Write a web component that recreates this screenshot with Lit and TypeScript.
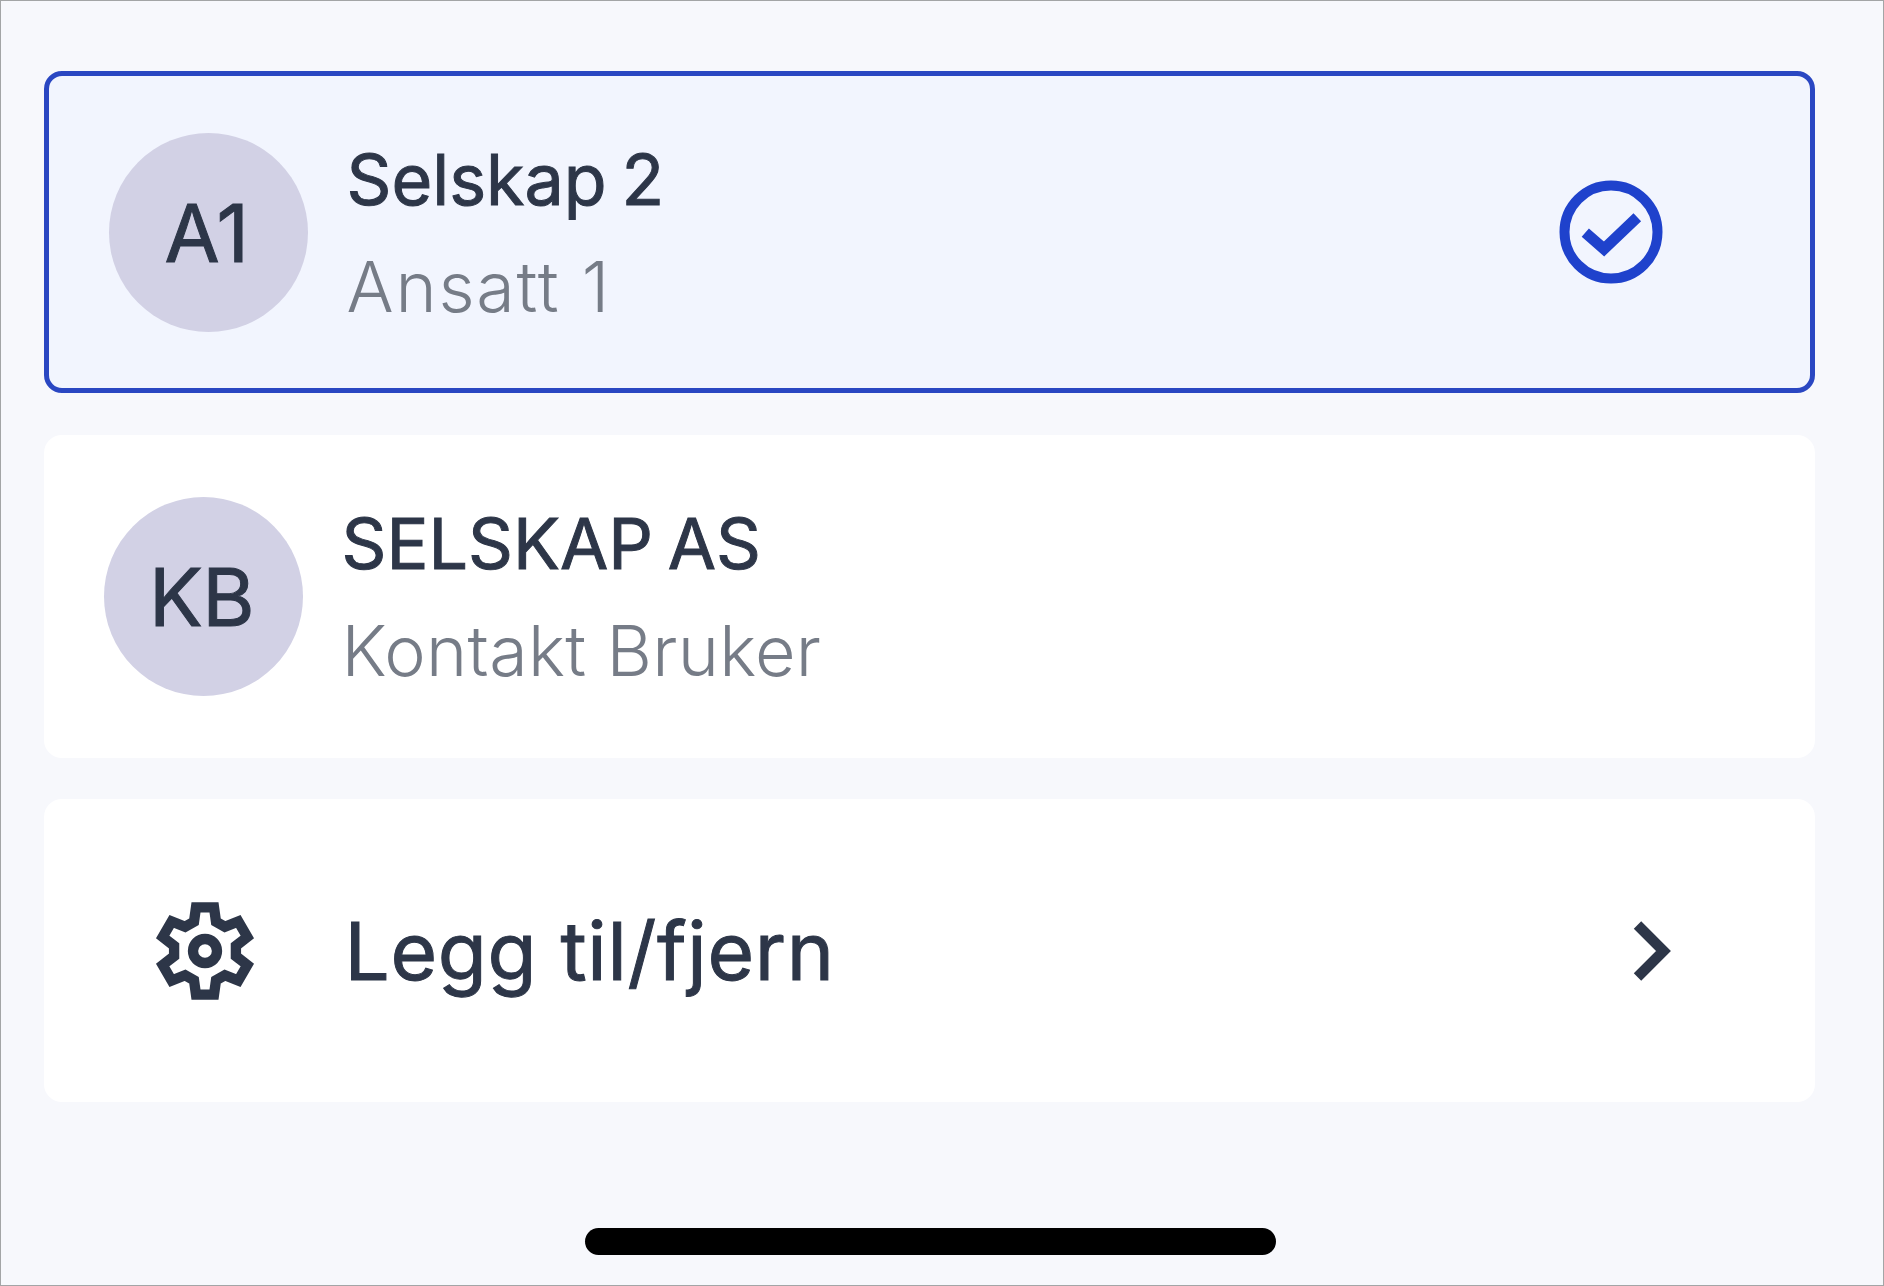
import { LitElement, html, css, svg } from "lit";
import { customElement } from "lit/decorators.js";

function gearPath(): string {
  const tooth: [number, number][] = [[-33, -88], [-27, -131], [27, -131], [33, -88]];
  const pts: string[] = [];
  for (let i = 0; i < 6; i++) {
    const a = (i * Math.PI) / 3;
    const c = Math.cos(a), s = Math.sin(a);
    for (const [x, y] of tooth) {
      pts.push(`${(x * c - y * s).toFixed(1)} ${(x * s + y * c).toFixed(1)}`);
    }
  }
  return "M" + pts.join("L") + "Z";
}

@customElement("app-root")
export class AppRoot extends LitElement {
  static styles = css`
    :host {
      display: block;
      width: 1884px;
      height: 1286px;
      font-family: Inter, "Liberation Sans", sans-serif;
      color: #2d3648;
    }
    .screen {
      box-sizing: border-box;
      width: 100%;
      height: 100%;
      background: #f7f8fc;
      border: 1.5px solid #a3a5a6;
      display: flex;
      flex-direction: column;
      padding: 70px 68px 30px 42.5px;
    }
    .list {
      display: flex;
      flex-direction: column;
    }
    .card {
      box-sizing: border-box;
      display: flex;
      align-items: center;
      background: #ffffff;
      border-radius: 18px;
      height: 323px;
      padding-left: 60px;
      margin-bottom: 41px;
    }
    .card.selected {
      background: #f2f5fe;
      border: 5px solid #2a47c2;
      height: 322px;
      padding-left: 60px;
      margin-bottom: 42px;
    }
    .card.action {
      height: 303px;
      margin-bottom: 0;
      padding-left: 111px;
      padding-right: 136px;
    }
    .avatar {
      flex: none;
      width: 199px;
      height: 199px;
      border-radius: 50%;
      background: #d2d1e5;
      display: flex;
      align-items: center;
      justify-content: center;
      font-size: 80px;
      font-weight: 400;
      -webkit-text-stroke: 1px #2d3648;
      letter-spacing: -0.5px;
      padding-right: 3px;
      box-sizing: border-box;
    }
    .text {
      display: flex;
      flex-direction: column;
      margin-left: 39px;
      margin-top: 1px;
    }
    .title {
      font-size: 70px;
      line-height: 107px;
      font-weight: 400;
      -webkit-text-stroke: 1px #2d3648;
      word-spacing: -5px;
    }
    .sub {
      font-size: 70px;
      line-height: 107px;
      font-weight: 300;
      letter-spacing: 0.3px;
      color: #767c87;
    }
    .sub.wide {
      letter-spacing: 1.8px;
    }
    .check {
      margin-left: auto;
      margin-right: 146px;
      width: 106px;
      height: 106px;
      flex: none;
    }
    .gear {
      flex: none;
      width: 100px;
      height: 100px;
    }
    .label {
      font-size: 80px;
      line-height: 100px;
      font-weight: 400;
      -webkit-text-stroke: 1px #2d3648;
      letter-spacing: 0.7px;
      margin-left: 90px;
    }
    .chev {
      margin-left: auto;
      flex: none;
      width: 50px;
      height: 70px;
    }
    .bar {
      margin-top: auto;
      align-self: flex-start;
      margin-left: 541px;
      width: 691px;
      height: 27px;
      border-radius: 14px;
      background: #000;
    }
  `;

  private row(initials: string, title: string, sub: string, selected: boolean) {
    return html`
      <div class="card ${selected ? "selected" : ""}">
        <div class="avatar">${initials}</div>
        <div class="text">
          <div class="title">${title}</div>
          <div class="sub ${selected ? "wide" : ""}">${sub}</div>
        </div>
        ${selected
          ? html`<svg class="check" viewBox="0 0 106 106" fill="none" stroke="#1f42cc">
              <circle cx="53" cy="53" r="46.5" stroke-width="10"></circle>
              <path d="M27.3 53.7 L46 70 L79.3 38.3" stroke-width="11"></path>
            </svg>`
          : ""}
      </div>
    `;
  }

  render() {
    return html`
      <div class="screen">
        <div class="list">
          ${this.row("A1", "Selskap 2", "Ansatt 1", true)}
          ${this.row("KB", "SELSKAP AS", "Kontakt Bruker", false)}
          <div class="card action">
            <svg class="gear" viewBox="-150 -150 300 300" fill="none" stroke="#2d3648" stroke-width="31">
              ${svg`<path d=${gearPath()} stroke-miterlimit="4"></path>
              <circle r="36"></circle>`}
            </svg>
            <div class="label">Legg til/fjern</div>
            <svg class="chev" viewBox="0 0 50 70" fill="none" stroke="#2d3648" stroke-width="10.5">
              <path d="M8.5 9 L34.5 35 L8.5 61"></path>
            </svg>
          </div>
        </div>
        <div class="bar"></div>
      </div>
    `;
  }
}
